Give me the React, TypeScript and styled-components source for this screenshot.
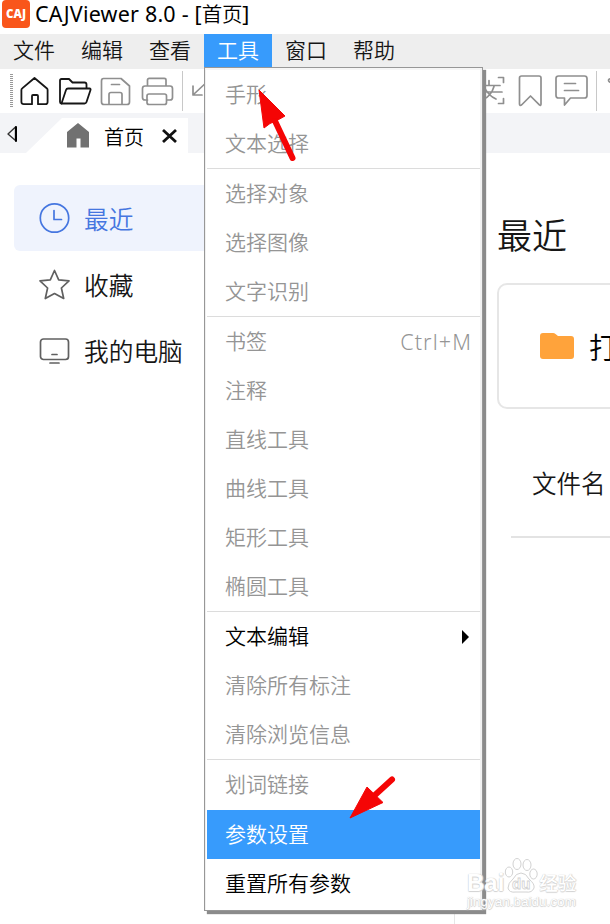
import React from "react";
import styled, { createGlobalStyle, css } from "styled-components";

const Global = createGlobalStyle`
  * { box-sizing: border-box; }
  body { margin: 0; background: #fff; overflow: hidden; }
`;

const Page = styled.div`
  position: relative;
  width: 610px;
  height: 924px;
  overflow: hidden;
  display: flex;
  flex-direction: column;
  background: #fff;
  color: #161616;
  font-family: "Noto Sans", "Noto Sans CJK SC", sans-serif;
  font-weight: 350;
  white-space: nowrap;
`;

const TitleBar = styled.header`
  display: flex;
  align-items: center;
  height: 34px;
  padding: 0 0 6px 2px;
  gap: 5px;
  color: #000;
`;

const Title = styled.span`
  display: flex;
  align-items: center;
  font-size: 21.5px;
  line-height: 28px;
  font-weight: 400;
  letter-spacing: 0.2px;
`;

const TitleDoc = styled.span`
  font-size: 20.5px;
  font-weight: 350;
  letter-spacing: -0.3px;
`;

const Logo = styled.span`
  display: grid;
  place-items: center;
  width: 28px;
  height: 28px;
  border-radius: 4px;
  background: #f9561b;
  color: #fff;
  font: 800 11.5px/28px "Open Sans", sans-serif;
`;

const MenuBar = styled.nav`
  display: flex;
  height: 35px;
  background: #eee;
`;

const MenuName = styled.span<{ $open?: boolean }>`
  width: 68px;
  height: 33px;
  font-size: 21px;
  line-height: 32px;
  text-align: center;
  ${(p) => p.$open && css`background: #379bfc; color: #fff;`}
`;

const ToolBar = styled.div`
  display: flex;
  justify-content: space-between;
  height: 44px;
`;

const ToolGroup = styled.div`
  display: flex;
  align-items: center;
`;

const Grip = styled.span`
  width: 3px;
  height: 34px;
  margin: 0 6px 0 10px;
  background: repeating-linear-gradient(#999 0 1px, #fff 1px 2px);
`;

const Divider = styled.span`
  width: 1px;
  height: 40px;
  background: #c8c8c8;
`;

const Icon = styled.svg`
  display: block;
  flex: none;
  fill: none;
  stroke: currentColor;
  stroke-width: 1.8;
  stroke-linejoin: round;
  stroke-linecap: round;
`;

const MutedIcon = styled(Icon)`
  color: #8f8f8f;
  stroke-width: 1.7;
`;

const TabBar = styled.div`
  display: flex;
  height: 40px;
  background: #f3f4f7;
`;

const TabScroll = styled.div`
  width: 26px;
  padding: 12px 0 0 6px;
`;

const Tab = styled.div`
  display: flex;
  align-items: center;
  width: 162px;
  margin-top: 5px;
  padding: 0 10px 0 40px;
  background: #fff;
  clip-path: polygon(36px 0, 100% 0, 100% 100%, 0 100%);
`;

const TabLabel = styled.span`
  width: 40px;
  margin: 5px 17px 0 14px;
  font-size: 20px;
  line-height: 34px;
  color: #000;
`;

const Body = styled.div`
  display: flex;
  flex: 1;
`;

const SideBar = styled.aside`
  display: flex;
  flex: none;
  flex-direction: column;
  width: 455px;
  padding: 32px 0 0 14px;
  border-right: 1px solid #e6e6e6;
`;

const SideItem = styled.div<{ $active?: boolean }>`
  display: flex;
  align-items: center;
  height: 66px;
  padding-left: 24px;
  gap: 13px;
  border-radius: 6px;
  font-size: 24.7px;
  ${(p) => p.$active && css`background: #eff3fd; color: #4576e0;`}
`;

const SideIcon = styled(Icon)<{ $active?: boolean }>`
  color: ${(p) => (p.$active ? "#4576e0" : "#606060")};
  stroke-width: 1.7;
`;

const Main = styled.main`
  flex: none;
  width: 240px;
  padding: 55px 0 0 42px;
`;

const Heading = styled.h1`
  margin: 0;
  font-size: 35px;
  line-height: 56px;
  font-weight: 350;
`;

const OpenCard = styled.div`
  display: flex;
  align-items: center;
  gap: 14px;
  height: 126px;
  margin-top: 19px;
  padding-left: 41px;
  border: 2px solid #e6e6e6;
  border-radius: 10px;
  font-size: 29px;
  color: #000;
`;

const ColumnHead = styled.div`
  height: 109px;
  margin: 20px 0 0 14px;
  padding-left: 21px;
  border-bottom: 2px solid #e3e3e3;
  font-size: 24.5px;
  line-height: 109px;
`;

const Menu = styled.div`
  position: absolute;
  left: 204px;
  top: 67px;
  width: 279px;
  height: 844px;
  padding: 2px;
  border: 1px solid #979797;
  background: #fff;
  box-shadow: inset 1px 0 #f0f0f0, inset -2px 0 #f2f2f2, inset 0 2px #f6f6f6, 3px 3px 1px #8b8b8b;
`;

const MenuGroup = styled.div<{ $first?: boolean }>`
  border-top: ${(p) => (p.$first ? "0" : "1px solid #dcdcdc")};
`;

const MenuItem = styled.div<{ $tone: "off" | "on" | "hot" }>`
  display: flex;
  align-items: center;
  justify-content: space-between;
  height: 49px;
  padding: 0 9px 0 18px;
  font-size: 21px;
  line-height: 49px;
  color: ${(p) => ({ off: "#959595", on: "#000", hot: "#fff" })[p.$tone]};
  background: ${(p) => (p.$tone === "hot" ? "#379bfc" : "transparent")};
`;

const MenuGap = styled.div`
  height: 1px;
`;

const Shortcut = styled.span`
  margin-right: -1px;
  font-size: 21.5px;
  letter-spacing: 1.1px;
`;

const Annotation = styled.svg<{ $x: number; $y: number }>`
  position: absolute;
  left: ${(p) => p.$x}px;
  top: ${(p) => p.$y}px;
  fill: #f50505;
  stroke: #f50505;
`;

const Watermark = styled.div`
  position: absolute;
  left: 467px;
  top: 856px;
  width: 118px;
  color: #fff;
  font-family: "Liberation Sans", "Noto Sans CJK SC", sans-serif;
  text-shadow: 0 0 1px #c4c4c4, 1px 0 1px #ddd, 0 1px 1px #d4d4d4;
`;

const Brand = styled.div`
  display: flex;
  align-items: flex-end;
  height: 42px;
  font-size: 24px;
  font-weight: 700;
  line-height: 30px;
`;

const BrandCn = styled.span`
  margin-left: 1px;
  font-size: 18.5px;
  font-weight: 500;
  line-height: 29px;
`;

const Paw = styled.svg`
  width: 34px;
  height: 38px;
  margin-bottom: 4px;
  fill: #fff;
  stroke: #d2d2d2;
  stroke-width: 1;
`;

const PawText = styled.text`
  font: 700 15px "Liberation Sans", sans-serif;
  text-shadow: none;
  fill: #fff;
  stroke-width: 0.8;
`;

const Site = styled.div`
  font-size: 13.5px;
  line-height: 13px;
  margin-top: -3px;
`;

type Entry = [label: string, tone?: "off" | "on" | "hot", extra?: React.ReactNode];

const groups: Entry[][] = [
  [["手形"], ["文本选择"]],
  [["选择对象"], ["选择图像"], ["文字识别"]],
  [
    ["书签", "off", <Shortcut key="s">Ctrl+M</Shortcut>],
    ["注释"],
    ["直线工具"],
    ["曲线工具"],
    ["矩形工具"],
    ["椭圆工具"],
  ],
  [
    ["文本编辑", "on", <svg key="a" width="12" height="14"><path d="M3 0v14l7-7z" fill="#000" /></svg>],
    ["清除所有标注"],
    ["清除浏览信息"],
  ],
  [["划词链接"], ["参数设置", "hot"], ["重置所有参数", "on"]],
];

const names = ["文件", "编辑", "查看", "工具", "窗口", "帮助"];

export default function App() {
  return (
    <Page>
      <Global />
      <TitleBar>
        <Logo>CAJ</Logo>
        <Title>CAJViewer 8.0 -&nbsp;[<TitleDoc>首页</TitleDoc>]</Title>
      </TitleBar>
      <MenuBar>
        {names.map((n) => <MenuName key={n} $open={n === "工具"}>{n}</MenuName>)}
      </MenuBar>
      <ToolBar>
        <ToolGroup>
          <Grip />
          <Icon width="31" height="34" viewBox="0 0 31 34">
            <path d="M15.500 4 28 14.500Q28.600 15 28.600 16V28q0 2.200-2.200 2.200H19V22q0-1-1-1h-4q-1 0-1 1v8.200H4.800Q2.400 30.200 2.400 28V16q0-1 .8-1.600z" />
          </Icon>
          <Icon width="42" height="34" viewBox="0 0 42 34">
            <path d="M11.500 29.500Q10 29.500 10 28V6.500Q10 5 11.500 5H19l3.500 3.500h12Q36.500 8.500 36.500 10.500v3.500" />
            <path d="M11.500 29.500 16 16q.5-1.500 2-1.500h21.500q1.500 0 1 1.500l-4 12q-.5 1.500-2 1.500z" />
          </Icon>
          <MutedIcon width="44" height="34" viewBox="0 0 44 34">
            <path d="M11.500 4.500H29L37.500 12v16q0 2.500-2.500 2.500h-23Q9.500 30.500 9.500 28V7q0-2.500 2-2.500zM17 30V20.500q0-2 2-2h9q2 0 2 2V30M19.500 10.500h8" />
          </MutedIcon>
          <MutedIcon width="46" height="34" viewBox="0 0 46 34">
            <path d="M11.500 12V6q0-1.600 1.700-1.600h15q1.800 0 1.800 1.600v6M11.500 26H9Q6.500 26 6.500 23.500v-9Q6.500 12 9 12h25q2.500 0 2.500 2.500v9Q36.500 26 34 26h-3.500M13 20h15.500q2 0 2 2v6.500q0 2-2 2H13q-2 0-2-2V22q0-2 2-2z" />
          </MutedIcon>
          <Divider />
          <MutedIcon width="30" height="34" viewBox="0 0 30 34">
            <path d="M10 12v9h9M11 20 25 7" />
          </MutedIcon>
        </ToolGroup>
        <ToolGroup>
          <MutedIcon width="40" height="34" viewBox="0 0 40 34">
            <path d="M23.500 3.500h5v5M23.500 29.500h5v-5M5 11.500h20M4 18h23M14 6.500v5M9 12.500q4 9 12 12.500M19 12.500q-3 10-11 13" />
          </MutedIcon>
          <MutedIcon width="34" height="34" viewBox="0 0 34 34">
            <path d="M6.500 2h17.500q2 0 2 2v26q0 2-1.600.9L15.500 22l-9 9Q4.500 32 4.500 30V4q0-2 2-2z" />
          </MutedIcon>
          <MutedIcon width="47" height="34" viewBox="0 0 47 34">
            <path d="M9.500 2h26q2.500 0 2.500 2.500v17q0 2.500-2.500 2.500h-14l-6 7v-7h-6Q7 24 7 21.500v-17Q7 2 9.500 2zM15.500 9.500h11M15.500 16.500h14" />
          </MutedIcon>
          <Divider />
          <MutedIcon width="13" height="34" viewBox="0 0 13 34">
            <path d="M12.500 5q-2 1 0 3" />
          </MutedIcon>
        </ToolGroup>
      </ToolBar>
      <TabBar>
        <TabScroll>
          <Icon width="12" height="18" viewBox="0 0 12 18">
            <path d="M9.500 2 2 9l7.500 6.500z" stroke="#333" strokeWidth="1.400" />
            <path d="M10 2v14" stroke="#000" strokeWidth="2" />
          </Icon>
        </TabScroll>
        <Tab>
          <svg width="24" height="26" viewBox="0 0 24 26">
            <path d="M12 0 23 9v15.500H14.500v-9h-4v9H1V9z" fill="#717171" />
          </svg>
          <TabLabel>首页</TabLabel>
          <svg width="17" height="16" viewBox="0 0 17 16">
            <path d="M2 2 15 14M15 2 2 14" stroke="#111" strokeWidth="2.800" />
          </svg>
        </Tab>
      </TabBar>
      <Body>
        <SideBar>
          <SideItem $active>
            <SideIcon $active width="33" height="34" viewBox="0 0 33 34">
              <circle cx="16.500" cy="17" r="14.200" />
              <path d="M16 9.500V18.500h7.500" />
            </SideIcon>
            最近
          </SideItem>
          <SideItem>
            <SideIcon width="33" height="34" viewBox="0 0 33 34">
              <path d="m16.500 3.500 4.200 9.300 10.300 1-7.600 7.200 2.300 10.500-9.200-5-9.200 5 2.300-10.500L2 13.800l10.300-1z" />
            </SideIcon>
            收藏
          </SideItem>
          <SideItem>
            <SideIcon width="33" height="34" viewBox="0 0 33 34">
              <rect x="2.500" y="6" width="28" height="20.500" rx="3" />
              <path d="M14 21.500h5M12 30h9" />
            </SideIcon>
            我的电脑
          </SideItem>
        </SideBar>
        <Main>
          <Heading>最近</Heading>
          <OpenCard>
            <svg width="35" height="28" viewBox="0 0 35 28">
              <path d="M3 1h10q1.500 0 2.500 1L18 4h13q3 0 3 3v17q0 3-3 3H3q-3 0-3-3V4q0-3 3-3z" fill="#ffa33b" />
            </svg>
            打
          </OpenCard>
          <ColumnHead>文件名</ColumnHead>
        </Main>
      </Body>
      <Menu>
        {groups.map((entries, i) => (
          <MenuGroup key={i} $first={i === 0}>
            {entries.map(([label, tone = "off", extra]) => (
              <React.Fragment key={label}>
                {tone === "hot" && <MenuGap />}
                <MenuItem $tone={tone}>
                  <span>{label}</span>
                  {extra}
                </MenuItem>
              </React.Fragment>
            ))}
          </MenuGroup>
        ))}
      </Menu>
      <Annotation $x={255} $y={86} width="46" height="80">
        <path d="M4 4 30 30 21 35 15 37.500 9 42z" strokeWidth="1" />
        <path d="m20 35 17.500 37" strokeWidth="6" strokeLinecap="round" />
      </Annotation>
      <Annotation $x={345} $y={770} width="56" height="54">
        <path d="M5 48 22 17 38 32.500z" strokeWidth="1" />
        <path d="M30 25 47 9.500" strokeWidth="6" strokeLinecap="round" />
      </Annotation>
      <Watermark>
        <Brand>
          Bai
          <Paw viewBox="0 0 34 38">
            <ellipse cx="5" cy="16" rx="3.700" ry="5" />
            <ellipse cx="13" cy="8" rx="4" ry="5.500" />
            <ellipse cx="23" cy="9" rx="4" ry="5.500" />
            <ellipse cx="29.500" cy="18" rx="3.700" ry="5" />
            <path d="M17 17q5 0 8 6 6 5 5 9-2 5-8 4H12q-7 1-8-4 0-5 5-9 3-6 8-6z" />
            <PawText x="8" y="33">du</PawText>
          </Paw>
          <BrandCn>经验</BrandCn>
        </Brand>
        <Site>jingyan.baidu.com</Site>
      </Watermark>
    </Page>
  );
}
